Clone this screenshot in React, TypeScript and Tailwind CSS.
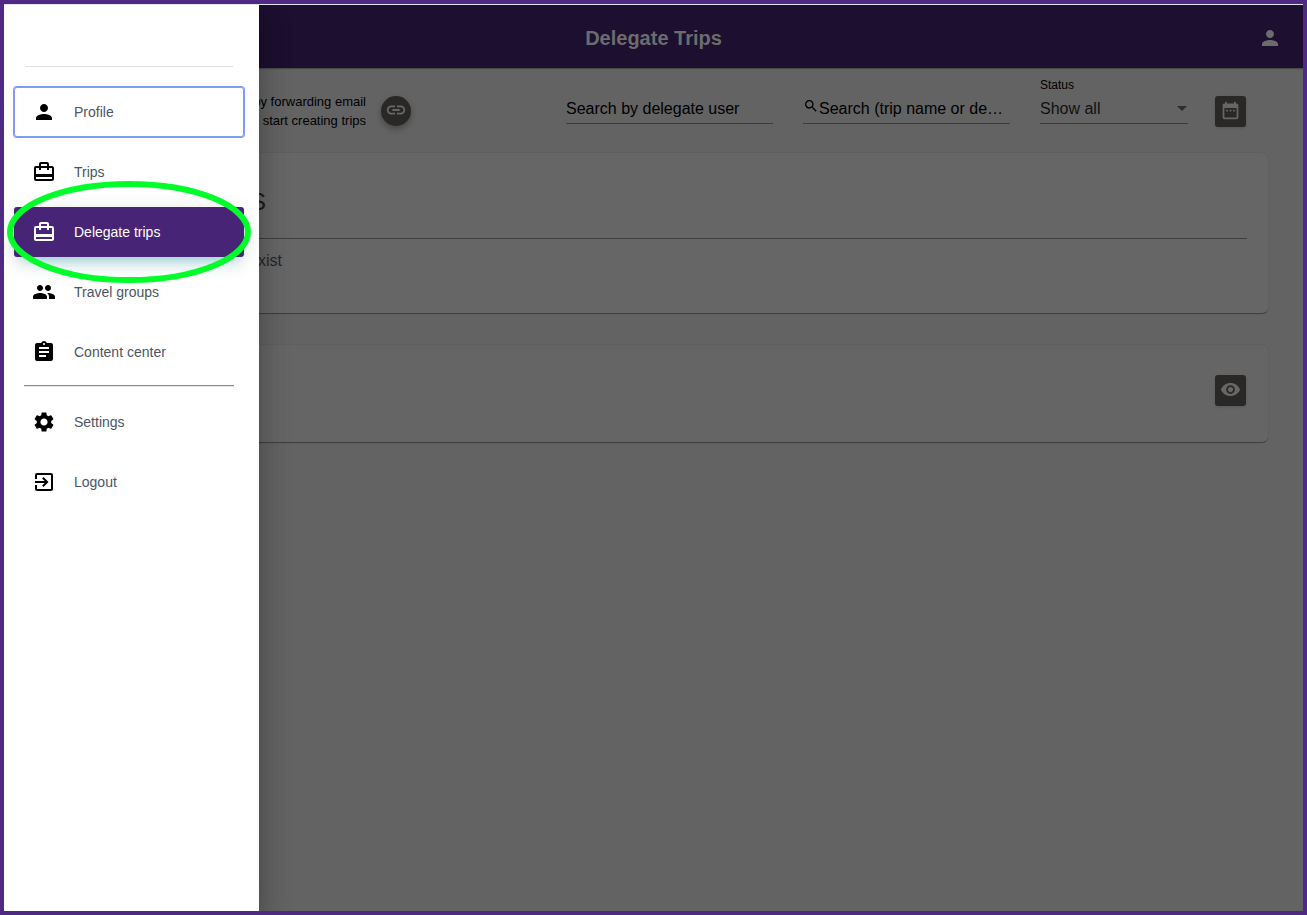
import React from "react";
import {
  MdArrowDropDown,
  MdAssignment,
  MdCardTravel,
  MdDateRange,
  MdExitToApp,
  MdLink,
  MdPeople,
  MdPerson,
  MdSearch,
  MdSettings,
  MdVisibility,
} from "react-icons/md";
import type { IconType } from "react-icons";
import clsx from "clsx";

type Item = {
  label: string;
  icon: IconType;
  focused?: boolean;
  active?: boolean;
};

const mainItems: Item[] = [
  { label: "Profile", icon: MdPerson, focused: true },
  { label: "Trips", icon: MdCardTravel },
  { label: "Delegate trips", icon: MdCardTravel, active: true },
  { label: "Travel groups", icon: MdPeople },
  { label: "Content center", icon: MdAssignment },
];

const accountItems: Item[] = [
  { label: "Settings", icon: MdSettings },
  { label: "Logout", icon: MdExitToApp },
];

const NavList = ({ items }: { items: Item[] }) => (
  <ul className="flex flex-col gap-2.5">
    {items.map(({ label, icon: Icon, focused, active }) => (
      <li key={label}>
        <a
          href="#"
          className={clsx(
            "flex h-[50px] items-center gap-[18px] rounded-[3px] pl-[18px] text-sm",
            active
              ? "bg-[#482477] text-white shadow-[0_12px_20px_-10px_rgba(0,172,193,0.28),0_4px_20px_0_rgba(0,0,0,0.12),0_7px_8px_-5px_rgba(0,172,193,0.2)]"
              : "text-[#4a5564]",
            focused && "ring-1 inset-ring-1 ring-[#7f9cf5] inset-ring-[#7f9cf5]"
          )}
        >
          <Icon size={24} className={active ? "text-white" : "text-black"} />
          <span>{label}</span>
        </a>
      </li>
    ))}
  </ul>
);

const Drawer = () => (
  <aside className="absolute inset-y-0 left-0 w-[255px] bg-white pr-[15px] pl-2.5 shadow-[0_8px_10px_-5px_rgba(0,0,0,0.2),0_16px_24px_2px_rgba(0,0,0,0.14),0_6px_30px_5px_rgba(0,0,0,0.12)]">
    <div className="mx-[11px] h-[62px] border-b border-[#e0e0e0]" />
    <nav className="pt-5">
      <NavList items={mainItems} />
      <hr className="mx-2.5 mt-2 mb-2.5 border-t border-b border-t-[#8a8a8a] border-b-[#e6e6e6]" />
      <NavList items={accountItems} />
    </nav>
    {/* highlight around the active entry */}
    <svg
      className="pointer-events-none absolute top-[175px] left-[3px]"
      width="245"
      height="104"
      viewBox="0 0 245 104"
      fill="none"
    >
      <ellipse cx="122" cy="52" rx="119" ry="48" stroke="#00ff2a" strokeWidth="6" />
    </svg>
  </aside>
);

const Header = () => (
  <header className="grid h-[63px] grid-cols-3 items-center bg-[#1d0f30] px-[21px] pt-0.5 text-[#6c6c6c] shadow-[0_1px_1px_rgba(0,0,0,0.25)]">
    <h1 className="col-start-2 text-center text-xl font-bold">Delegate Trips</h1>
    <button aria-label="Account" className="justify-self-end">
      <MdPerson size={24} />
    </button>
  </header>
);

const Toolbar = () => (
  <div className="flex h-[85px] justify-between pr-[22px]">
    <div className="flex w-[372px] items-center gap-[15px]">
      <p className="flex-1 text-right text-[13px] leading-[19px] text-black">
        by forwarding email
        <br />d start creating trips
      </p>
      <button
        aria-label="Copy link"
        className="flex size-[30px] items-center justify-center rounded-full bg-[#292826] pb-0.5 text-[#666] shadow-[0_3px_6px_rgba(0,0,0,0.3)]"
      >
        <MdLink size={22} />
      </button>
    </div>
    <div className="flex items-end gap-[30px] pb-[26px] text-base text-black">
      <div className="pb-[3px]">
        <input
          aria-label="Search by delegate user"
          placeholder="Search by delegate user"
          className="h-8 w-[207px] border-b border-[#3b3b3b] pt-0.5 placeholder:text-black focus:outline-none"
        />
      </div>
      <div className="pb-[3px]">
        <div className="flex h-8 w-[207px] border-b border-[#3b3b3b]">
          <MdSearch size={16} className="mt-1.5 shrink-0" />
          <input
            aria-label="Search trips"
            placeholder="Search (trip name or de…"
            className="w-full min-w-0 pt-0.5 placeholder:text-black focus:outline-none"
          />
        </div>
      </div>
      <div className="flex flex-col pb-[3px]">
        <label htmlFor="status" className="text-xs leading-[14px]">
          Status
        </label>
        <div className="relative">
          <select
            id="status"
            className="h-8 w-[148px] appearance-none border-b border-[#3b3b3b] pt-0.5 text-[#111]"
          >
            <option>Show all</option>
          </select>
          <MdArrowDropDown
            size={24}
            className="pointer-events-none absolute top-1 -right-1.5 text-[#2e2e2e]"
          />
        </div>
      </div>
      <button
        aria-label="Pick dates"
        className="-ml-[3px] flex size-[31px] items-center justify-center rounded-[3px] bg-[#292826] pb-0.5 text-[#666] shadow-sm"
      >
        <MdDateRange size={21} />
      </button>
    </div>
  </div>
);

const App = () => {
  return (
    <div className="flex min-h-screen flex-col border-4 border-[#4e2a84] font-['Liberation_Sans',Arial,sans-serif]">
      <div className="relative flex flex-1 flex-col overflow-hidden border-t border-[#e4e4e4] bg-[#636363]">
        <Header />
        <main className="flex flex-col px-[35px]">
          <Toolbar />
          <section className="h-[161px] rounded-md border-b border-[#404040] bg-[#666] px-[21px] shadow-[0_0_2px_rgba(0,0,0,0.12)]">
            <div className="flex h-[86px] items-center border-b border-[#3f3f3f] pt-3">
              <h2 className="w-[206px] text-right text-2xl text-[#1c1c1c]">S</h2>
            </div>
            <p className="w-[222px] pt-2.5 text-right text-base text-[#262626]">exist</p>
          </section>
          <section className="mt-[31px] flex h-[98px] items-start justify-end rounded-md border-b border-[#404040] bg-[#656565] px-[22px] pt-[30px] shadow-[0_0_2px_rgba(0,0,0,0.12)]">
            <button
              aria-label="Show past trips"
              className="flex size-[31px] items-center justify-center rounded-[3px] bg-[#292826] pb-0.5 text-[#666] shadow-sm"
            >
              <MdVisibility size={21} />
            </button>
          </section>
        </main>
        <Drawer />
      </div>
    </div>
  );
};

export default App;
